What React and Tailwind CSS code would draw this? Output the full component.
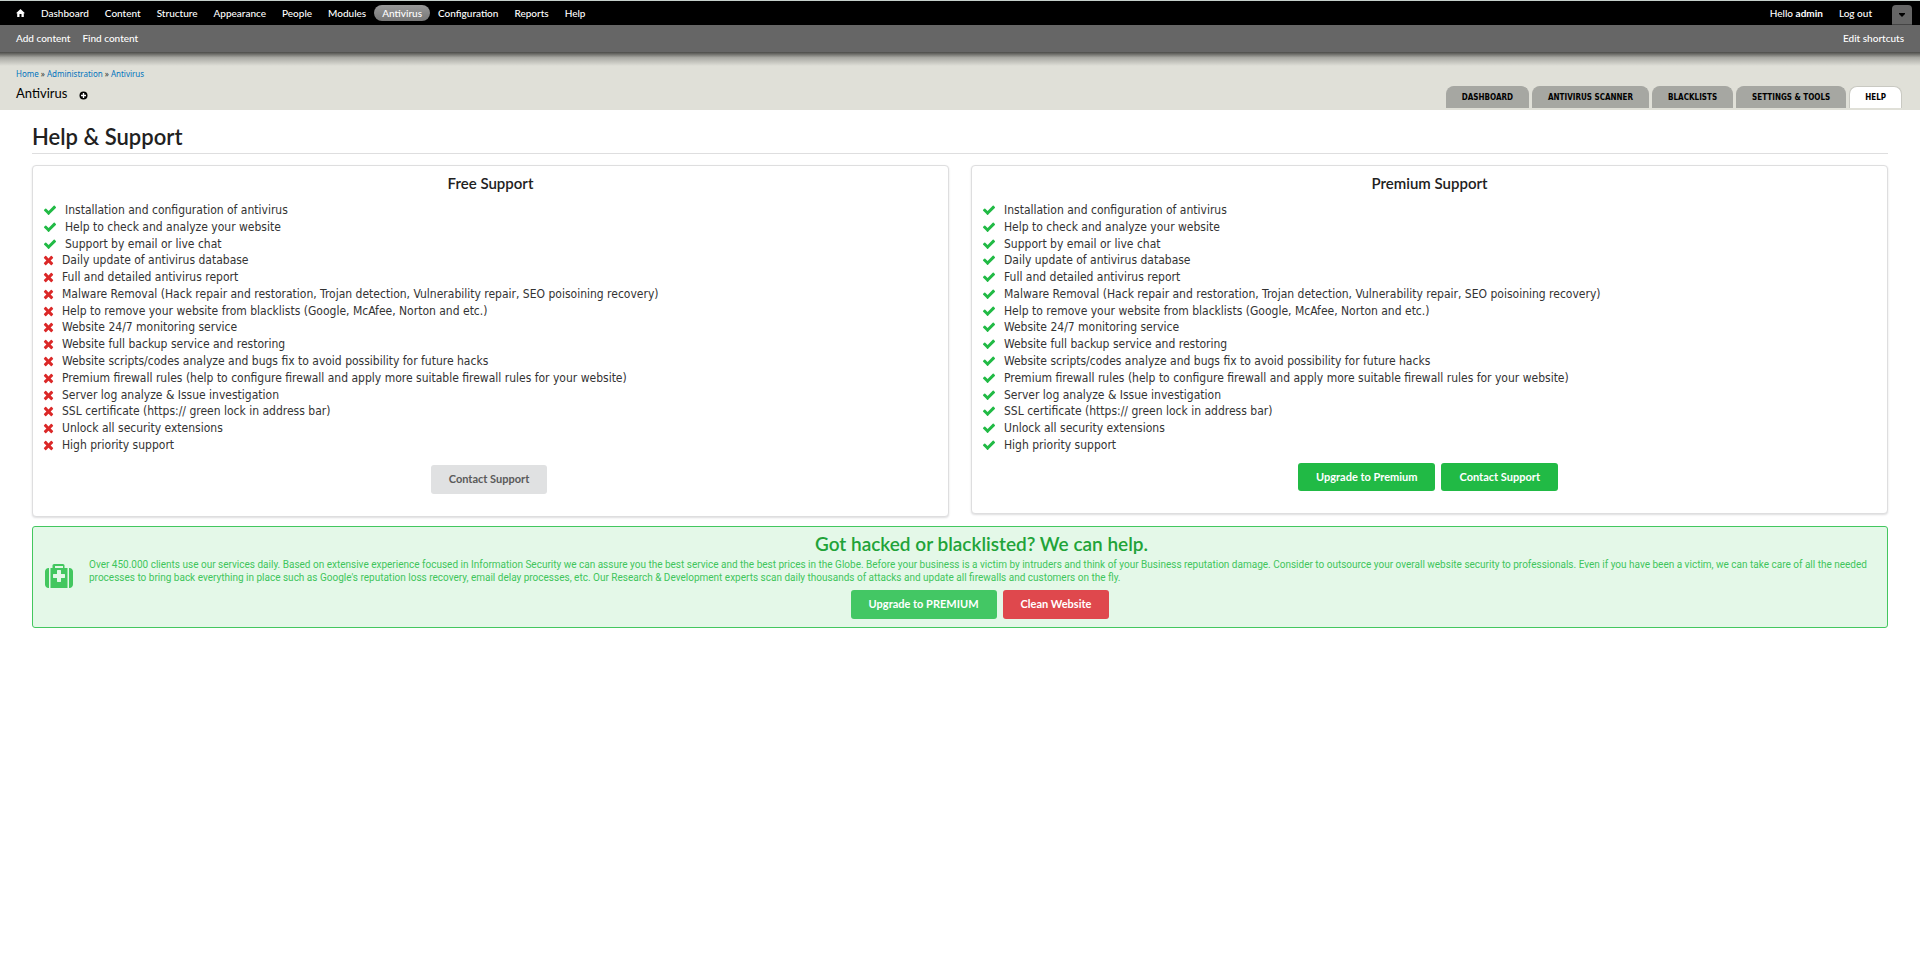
import React from 'react';
import clsx from 'clsx';

const MENU = ['Dashboard', 'Content', 'Structure', 'Appearance', 'People', 'Modules', 'Antivirus', 'Configuration', 'Reports', 'Help'];

const TABS = ['Dashboard', 'Antivirus Scanner', 'Blacklists', 'Settings & Tools', 'Help'];

const FEATURES = [
  { label: 'Installation and configuration of antivirus', free: true },
  { label: 'Help to check and analyze your website', free: true },
  { label: 'Support by email or live chat', free: true },
  { label: 'Daily update of antivirus database' },
  { label: 'Full and detailed antivirus report' },
  { label: 'Malware Removal (Hack repair and restoration, Trojan detection, Vulnerability repair, SEO poisoining recovery)' },
  { label: 'Help to remove your website from blacklists (Google, McAfee, Norton and etc.)' },
  { label: 'Website 24/7 monitoring service' },
  { label: 'Website full backup service and restoring' },
  { label: 'Website scripts/codes analyze and bugs fix to avoid possibility for future hacks' },
  { label: 'Premium firewall rules (help to configure firewall and apply more suitable firewall rules for your website)' },
  { label: 'Server log analyze & Issue investigation' },
  { label: 'SSL certificate (https:// green lock in address bar)' },
  { label: 'Unlock all security extensions' },
  { label: 'High priority support' },
];

function CheckIcon() {
  return (
    <svg viewBox="0 0 1792 1792" className="w-3.5 h-3.5 shrink-0 fill-[#21ba45]" aria-hidden="true">
      <path d="M1671 566q0 40-28 68l-724 724-136 136q-28 28-68 28t-68-28l-136-136-362-362q-28-28-28-68t28-68l136-136q28-28 68-28t68 28l294 295 656-657q28-28 68-28t68 28l136 136q28 28 28 68z" />
    </svg>
  );
}

function CrossIcon() {
  return (
    <svg viewBox="192 0 1408 1792" className="w-[11px] h-3.5 shrink-0 fill-[#db2828]" aria-hidden="true">
      <path d="M1490 1322q0 40-28 68l-136 136q-28 28-68 28t-68-28l-294-294-294 294q-28 28-68 28t-68-28l-136-136q-28-28-28-68t28-68l294-294-294-294q-28-28-28-68t28-68l136-136q28-28 68-28t68 28l294 294 294-294q28-28 68-28t68 28l136 136q28 28 28 68t-28 68l-294 294 294 294q28 28 28 68z" />
    </svg>
  );
}

function MedkitIcon() {
  return (
    <svg viewBox="0 256 1792 1536" className="w-7 h-6 shrink-0 fill-[#43c75f]" aria-hidden="true">
      <path d="M1280 1120v-192q0-14-9-23t-23-9h-224v-224q0-14-9-23t-23-9h-192q-14 0-23 9t-9 23v224h-224q-14 0-23 9t-9 23v192q0 14 9 23t23 9h224v224q0 14 9 23t23 9h192q14 0 23-9t9-23v-224h224q14 0 23-9t9-23zm-640-608h512v-128h-512v128zm-384 0v1280h-32q-92 0-158-66t-66-158v-832q0-92 66-158t158-66h32zm1184 0v1280h-1088v-1280h128v-160q0-40 28-68t68-28h576q40 0 68 28t28 68v160h128zm352 224v832q0 92-66 158t-158 66h-32v-1280h32q92 0 158 66t66 158z" />
    </svg>
  );
}

function Button({ className, children }) {
  return (
    <button type="button" className={clsx('px-[18px] mr-[3px] rounded-[3px] text-[11px] font-bold', className)}>
      {children}
    </button>
  );
}

function Toolbar() {
  return (
    <div className="text-[10px] font-medium text-white">
      <div className="h-[25px] flex items-center justify-between bg-black border-t border-[#c5cfca] px-2">
        <nav className="flex items-center leading-4">
          <a href="#" aria-label="Home" className="px-2">
            <svg viewBox="0 0 9 8" className="w-[9px] h-2 fill-white" aria-hidden="true">
              <path d="M4.500 0L9 4.300H7.800V8H5.500V5H3.500V8H1.200V4.300H0z" />
            </svg>
          </a>
          {MENU.map((item) => (
            <a
              key={item}
              href="#"
              className={clsx('px-2 rounded-full', item === 'Antivirus' && 'bg-linear-to-b from-[#999] to-[#777]')}
            >
              {item}
            </a>
          ))}
        </nav>
        <div className="h-full flex items-center">
          <a href="#" className="px-2">Hello <strong>admin</strong></a>
          <a href="#" className="px-2">Log out</a>
          <button type="button" aria-label="Toggle shortcuts" className="ml-3 w-5 h-5 self-end flex items-center justify-center rounded-t-[4px] bg-[#666] border-b border-[#444]">
            <svg viewBox="0 0 6 4" className="w-1.5 h-1 fill-black" aria-hidden="true">
              <path d="M0 0h6v1L3 4 0 1z" />
            </svg>
          </button>
        </div>
      </div>
      <div className="h-[27px] flex items-center justify-between bg-[#666] px-4">
        <div className="flex gap-3">
          <a href="#">Add content</a>
          <a href="#">Find content</a>
        </div>
        <a href="#">Edit shortcuts</a>
      </div>
    </div>
  );
}

function PageHeader() {
  return (
    <header className="relative flex items-end justify-between bg-[#e0e0d8] pl-4 pr-[18px] pt-4 pb-0.5">
      <div className="absolute inset-x-0 top-0 h-3.5 bg-linear-to-b from-[#4c4c49] via-[#a9a9a3] via-40% to-[#e0e0d8]" />
      <div className="pb-[5px]">
        <nav className="font-['Noto_Sans'] text-[8px] leading-3 text-[#0074bd]">
          <a href="#">Home</a>
          <span className="text-[#333]"> » </span>
          <a href="#">Administration</a>
          <span className="text-[#333]"> » </span>
          <a href="#">Antivirus</a>
        </nav>
        <div className="mt-[3px] flex items-center gap-3">
          <h1 className="text-[13px] leading-5 text-black">Antivirus</h1>
          <a href="#" aria-label="Add to shortcuts">
            <svg viewBox="0 0 9 9" className="mt-1 w-[9px] h-[9px]" aria-hidden="true">
              <circle cx="4.500" cy="4.500" r="4" fill="#000" />
              <path d="M4.500 2v5M2 4.500h5" stroke="#fff" strokeWidth="1.400" />
            </svg>
          </a>
        </div>
      </div>
      <nav className="flex gap-[3px] font-['DejaVu_Sans_Condensed'] text-[8px] font-bold uppercase text-black">
        {TABS.map((tab) => (
          <a
            key={tab}
            href="#"
            className={clsx(
              'px-[15px] leading-[21px] rounded-t-lg border border-b-0',
              tab === 'Help' ? 'bg-white border-[#c9c9c2]' : 'bg-[#a6a7a2] border-[#a6a7a2]'
            )}
          >
            {tab}
          </a>
        ))}
      </nav>
    </header>
  );
}

function SupportCard({ title, premium, children }) {
  return (
    <section className="px-2.5 pt-[7px] pb-[22px] bg-white border border-[#dededf] rounded-[4px] shadow-[0_1px_2px_0_rgba(34,36,38,0.15)]">
      <h3 className="text-[15px] leading-5 font-semibold text-center">{title}</h3>
      <ul className="mt-[9px] h-[251px] flex flex-col justify-between font-['DejaVu_Sans_Condensed'] text-xs leading-4 text-[#333]">
        {FEATURES.map((f) => (
          <li key={f.label} className="flex items-center gap-2">
            {premium || f.free ? <CheckIcon /> : <CrossIcon />}
            {f.label}
          </li>
        ))}
      </ul>
      {children}
    </section>
  );
}

export default function App() {
  return (
    <div className="min-h-screen bg-white font-['Lato',sans-serif] text-[#212121]">
      <Toolbar />
      <PageHeader />

      <main className="px-8 pt-[11px]">
        <h2 className="text-[22px] leading-8 font-semibold border-b border-[#dededf]">Help &amp; Support</h2>

        <div className="mt-[11px] grid grid-cols-2 gap-[22px] items-start">
          <SupportCard title="Free Support">
            <div className="mt-3 flex justify-center">
              <Button className="h-[29px] bg-[#e0e1e2] text-[#5a5a5a]">Contact Support</Button>
            </div>
          </SupportCard>
          <SupportCard title="Premium Support" premium>
            <div className="mt-2.5 flex justify-center gap-[3px]">
              <Button className="h-7 bg-[#21ba45] text-white">Upgrade to Premium</Button>
              <Button className="h-7 bg-[#21ba45] text-white">Contact Support</Button>
            </div>
          </SupportCard>
        </div>

        {/* Promo */}
        <section className="mt-[9px] pl-3 pr-[13px] pt-[5px] pb-2 flex items-center gap-4 bg-[#e4f8e8] border border-[#43c75f] rounded-[3px]">
          <MedkitIcon />
          <div className="flex-1">
            <h3 className="text-[19px] leading-6 font-semibold text-center text-[#21a338]">
              Got hacked or blacklisted? We can help.
            </h3>
            <p className="mt-0.5 font-['Roboto'] text-[10px] leading-[13px] text-[#3fc55c]">
              Over 450.000 clients use our services daily. Based on extensive experience focused in Information Security we can assure you the best service and the best prices in the Globe. Before your business is a victim by intruders and think of your Business reputation damage. Consider to outsource your overall website security to professionals. Even if you have been a victim, we can take care of all the needed processes to bring back everything in place such as Google's reputation loss recovery, email delay processes, etc. Our Research &amp; Development experts scan daily thousands of attacks and update all firewalls and customers on the fly.
            </p>
            <div className="mt-1.5 flex justify-center gap-[3px]">
              <Button className="h-[29px] bg-[#43c764] text-white">Upgrade to PREMIUM</Button>
              <Button className="h-[29px] bg-[#df484d] text-white">Clean Website</Button>
            </div>
          </div>
        </section>
      </main>
    </div>
  );
}
